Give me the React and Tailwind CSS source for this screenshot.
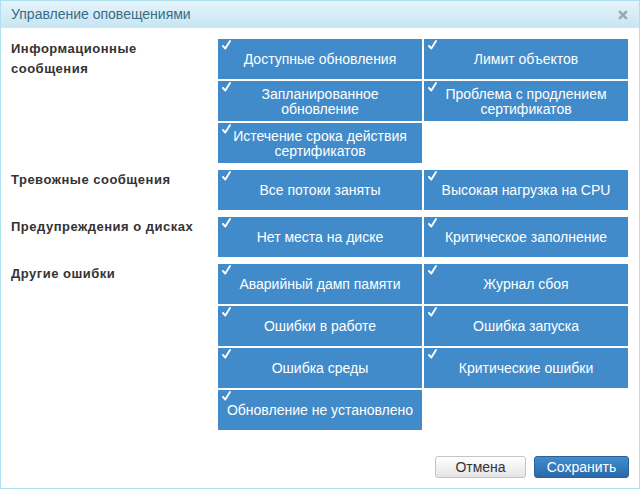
import React from 'react';

const groups = [
    {
        label: 'Информационные сообщения',
        items: [
            'Доступные обновления',
            'Лимит объектов',
            'Запланированное обновление',
            'Проблема с продлением сертификатов',
            'Истечение срока действия сертификатов',
        ],
    },
    {
        label: 'Тревожные сообщения',
        items: ['Все потоки заняты', 'Высокая нагрузка на CPU'],
    },
    {
        label: 'Предупреждения о дисках',
        items: ['Нет места на диске', 'Критическое заполнение'],
    },
    {
        label: 'Другие ошибки',
        items: [
            'Аварийный дамп памяти',
            'Журнал сбоя',
            'Ошибки в работе',
            'Ошибка запуска',
            'Ошибка среды',
            'Критические ошибки',
            'Обновление не установлено',
        ],
    },
];

const Check = () => (
    <svg className="absolute left-[4px] top-[1px]" width="9" height="10" viewBox="0 0 9 10">
        <path d="M1 6 L3.3 8.6 L8 1" fill="none" stroke="#fff" strokeWidth="1.9" strokeLinecap="round" strokeLinejoin="round" />
    </svg>
);

const Tile = ({ text }) => (
    <div className="relative h-[40px] bg-[#418bca] flex items-center justify-center px-[6px] pt-[1px] text-center text-white text-[14px] leading-[15px]">
        <Check />
        <span>{text}</span>
    </div>
);

export default function App() {
    return (
        <div
            className="w-[640px] h-[489px] border border-[#ade1ef] bg-white flex flex-col text-[#333]"
            style={{ fontFamily: '"Liberation Sans", Arial, sans-serif' }}
        >
            {/* Заголовок */}
            <div className="h-[27px] flex items-center justify-between pl-[10px] pr-[11px] bg-gradient-to-b from-[#e6f4fb] to-[#c6e5f2]">
                <span className="text-[14px] text-[#3b6b86]">Управление оповещениями</span>
                <svg width="10" height="10" viewBox="0 0 10 10" className="mt-[1px]">
                    <path d="M1.2 1.2 L8.8 8.8 M8.8 1.2 L1.2 8.8" stroke="#a3a3a3" strokeWidth="2.4" />
                </svg>
            </div>

            {/* Группы */}
            <div className="pt-[11px] pl-[10px] pr-[10px] flex flex-col gap-[7px]">
                {groups.map((g) => (
                    <div key={g.label} className="flex">
                        <div className="w-[207px] shrink-0">
                            <div className="max-w-[200px] font-bold text-[13px] leading-[20px] tracking-[0.5px] text-[#333]">{g.label}</div>
                        </div>
                        <div className="grid grid-cols-2 gap-[2px] w-[410px]">
                            {g.items.map((t) => (
                                <Tile key={t} text={t} />
                            ))}
                        </div>
                    </div>
                ))}
            </div>

            {/* Кнопки */}
            <div className="mt-auto flex justify-end gap-[8px] pr-[10px] pb-[10px]">
                <button className="h-[22px] w-[91px] rounded-[3px] border border-[#c4c4c4] bg-gradient-to-b from-[#ffffff] to-[#e4e4e4] text-[14px] text-[#333]">
                    Отмена
                </button>
                <button className="h-[22px] w-[95px] rounded-[3px] border border-[#2c609a] bg-gradient-to-b from-[#418dcf] to-[#2a69ab] text-[14px] text-white">
                    Сохранить
                </button>
            </div>
        </div>
    );
}
